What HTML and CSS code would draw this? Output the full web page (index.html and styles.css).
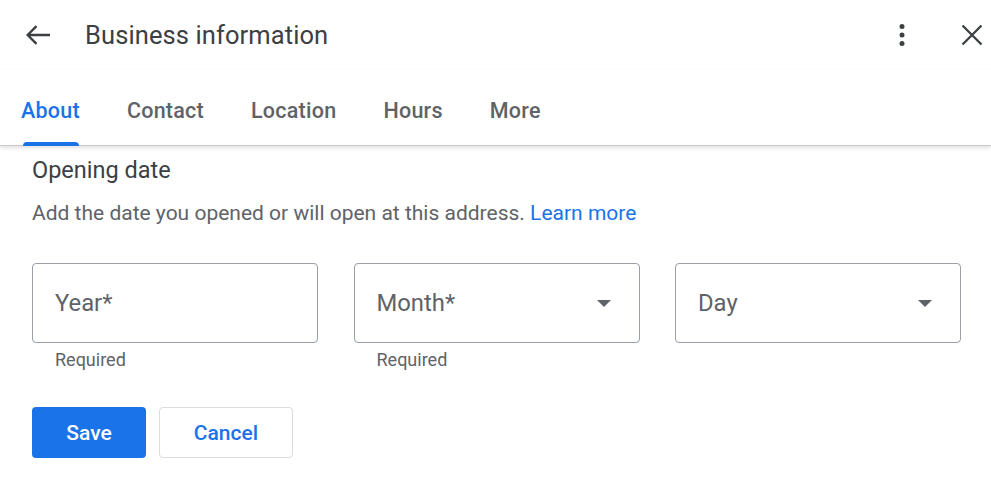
FILE: index.html
```
<!DOCTYPE html>
<html lang="en">
<head>
<meta charset="utf-8">
<title>Business information</title>
<link rel="stylesheet" href="styles.css">
</head>
<body>
<div class="panel">
  <header class="topbar">
    <button class="icon-btn back" aria-label="Back">
      <svg width="24" height="20" viewBox="0 0 24 20"><path d="M1.5 10H24M10.5 1.2L1.6 10l8.9 8.8" fill="none" stroke="#3c4043" stroke-width="2.4"/></svg>
    </button>
    <h1 class="title">Business information</h1>
    <div class="spacer"></div>
    <button class="icon-btn more" aria-label="More options">
      <svg width="24" height="24" viewBox="0 0 24 24"><circle cx="12" cy="3.5" r="2.5" fill="#3c4043"/><circle cx="12" cy="12" r="2.5" fill="#3c4043"/><circle cx="12" cy="20.5" r="2.5" fill="#3c4043"/></svg>
    </button>
    <button class="icon-btn close" aria-label="Close">
      <svg width="22" height="22" viewBox="0 0 22 22"><path d="M1.5 1.5l19 19M20.5 1.5l-19 19" fill="none" stroke="#3c4043" stroke-width="2.3"/></svg>
    </button>
  </header>
  <nav class="tabs">
    <a class="tab active">About</a>
    <a class="tab">Contact</a>
    <a class="tab">Location</a>
    <a class="tab">Hours</a>
    <a class="tab">More</a>
  </nav>
  <main class="content">
    <h2 class="section-title">Opening date</h2>
    <p class="desc">Add the date you opened or will open at this address. <a class="link">Learn more</a></p>
    <div class="fields">
      <div class="field">
        <div class="box"><span class="placeholder">Year*</span></div>
        <div class="hint">Required</div>
      </div>
      <div class="field">
        <div class="box"><span class="placeholder">Month*</span><span class="caret"></span></div>
        <div class="hint">Required</div>
      </div>
      <div class="field">
        <div class="box"><span class="placeholder">Day</span><span class="caret"></span></div>
      </div>
    </div>
    <div class="actions">
      <button class="btn primary">Save</button>
      <button class="btn secondary">Cancel</button>
    </div>
  </main>
</div>
</body>
</html>
```
FILE: styles.css
```
* { box-sizing: border-box; }
html, body { margin: 0; padding: 0; background: #fff; }
body { font-family: Roboto, "Noto Sans", Arial, sans-serif; color: #3c4043; }
.panel { width: 991px; height: 483px; overflow: hidden; }
.topbar { height: 70px; display: flex; align-items: center; padding: 0 8px 0 26px; }
.icon-btn { background: none; border: 0; padding: 0; display: flex; align-items: center; justify-content: center; cursor: pointer; }
.title { margin: 0 0 0 35px; font-size: 25.5px; font-weight: 400; color: #3c4043; letter-spacing: 0.1px; }
.spacer { flex: 1; }
.more { margin-right: 47px; }
.tabs { height: 76px; display: flex; align-items: stretch; gap: 47px; padding-left: 21px; border-bottom: 1px solid #c8c8c8; box-shadow: 0 2px 4px rgba(0,0,0,0.12); }
.tab { position: relative; display: flex; align-items: center; padding: 6px 0 0; font-size: 21.5px; font-weight: 500; color: #5f6368; letter-spacing: 0.25px; }
.tab.active { color: #1a73e8; }
.tab.active::after { content: ""; position: absolute; left: 2px; right: 1px; bottom: -1px; height: 4px; background: #1a73e8; border-radius: 4px 4px 0 0; }
.content { padding: 9px 0 0 32px; }
.section-title { margin: 0; font-size: 23.5px; font-weight: 400; line-height: 30px; color: #3c4043; }
.desc { margin: 15px 0 0; font-size: 21px; line-height: 26px; color: #5f6368; }
.link { color: #1a73e8; }
.fields { display: flex; gap: 35.5px; margin-top: 37px; }
.field { width: 286px; }
.box { height: 80px; border: 1px solid #9aa0a6; border-radius: 4px; display: flex; align-items: center; padding: 0 22px; }
.placeholder { flex: 1; font-size: 23.8px; color: #5f6368; }
.caret { width: 0; height: 0; border-left: 7px solid transparent; border-right: 7px solid transparent; border-top: 7px solid #5f6368; margin-right: 6px; }
.hint { font-size: 18px; color: #5f6368; padding: 7px 0 0 23px; line-height: 20px; }
.actions { display: flex; gap: 13px; margin-top: 37px; }
.btn { height: 51px; border-radius: 4px; font-family: Roboto, Arial, sans-serif; font-size: 21px; font-weight: 500; cursor: pointer; }
.primary { width: 114px; background: #1a73e8; color: #fff; border: 0; }
.secondary { width: 134px; background: #fff; color: #1a73e8; border: 1px solid #dadce0; }
```
